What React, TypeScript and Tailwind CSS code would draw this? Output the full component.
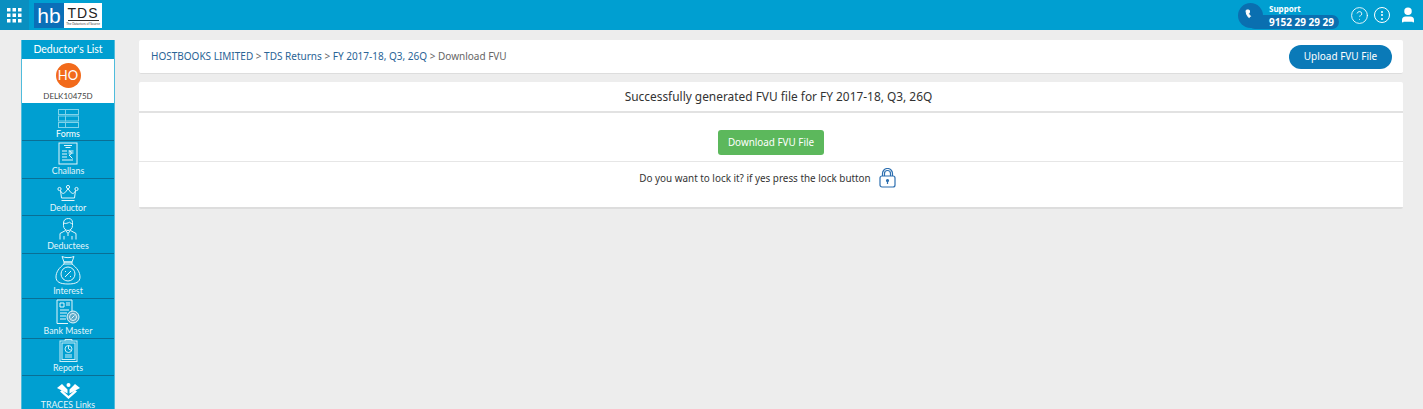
import { Phone, CircleHelp, User } from "lucide-react";
import { ReactNode } from "react";

const FormsIcon = () => (
  <svg width="21" height="19" viewBox="0 0 21 19" fill="none" stroke="#7fd3ea" strokeWidth="1">
    <rect x="0.5" y="0.5" width="7" height="5" />
    <rect x="7.5" y="0.500" width="13" height="5" />
    <rect x="0.500" y="7" width="7" height="5" />
    <rect x="7.500" y="7" width="13" height="5" />
    <rect x="0.500" y="13.500" width="7" height="5" />
    <rect x="7.500" y="13.500" width="13" height="5" />
  </svg>
);

const ChallansIcon = () => (
  <svg width="20" height="23" viewBox="0 0 20 23" fill="none" stroke="#e4f6fb" strokeWidth="1">
    <rect x="1" y="1" width="18" height="21" />
    <path d="M6 3.500h8M7.500 5.500h5M4 9h5M4 12h5M4 15h5M4 18h11" />
    <path d="M10.500 9h5M10.500 11h5M11 9c3 0 3 4 0 4l3.500 3.500" />
  </svg>
);

const DeductorIcon = () => (
  <svg width="22" height="17" viewBox="0 0 22 17" fill="none" stroke="#e4f6fb" strokeWidth="1">
    <circle cx="2.500" cy="4" r="1.600" />
    <circle cx="11" cy="2" r="1.600" />
    <circle cx="19.500" cy="4" r="1.600" />
    <path d="M3.500 5.500c1 3 3 4 5 1.500L11 3.800 13.500 7c2 2.500 4 1.500 5-1.500L17.500 13h-13zM4.500 15.500h13" />
  </svg>
);

const DeducteesIcon = () => (
  <svg width="18" height="22" viewBox="0 0 18 22" fill="none" stroke="#e4f6fb" strokeWidth="1">
    <path d="M4.500 5c0-3 2-4.500 5-4.500 2.500 0 4 1.500 4 4v3c0 3-2 5-4.500 5s-4.500-2-4.500-5z" />
    <path d="M4.500 5c2 1 5 0 6-1 .5 1 1.500 1.500 3 1.500" />
    <path d="M6.500 12.500 1 15.500V21.500M11.500 12.500l5.500 3V21.500M6.500 12.500 9 15.500l2.500-3M5 18v3.500M13 18v3.500M9 15.500V18" />
  </svg>
);

const InterestIcon = () => (
  <svg width="26" height="30" viewBox="0 0 26 30" fill="none" stroke="#e4f6fb" strokeWidth="1">
    <path d="M7 1.500c3 1.500 9 1.500 12 0l-2 5.500h-8zM9 7h8v2H9z" />
    <path d="M9 9C4 13 1 17 1 22c0 5 4 7 12 7s12-2 12-7c0-5-3-9-8-13" />
    <circle cx="13" cy="19" r="7" />
    <path d="M10 16.500h1M15 21.500h1M10 22l6-6" />
  </svg>
);

const BankMasterIcon = () => (
  <svg width="24" height="26" viewBox="0 0 24 26" fill="none" stroke="#e4f6fb" strokeWidth="1">
    <path d="M12 24.500H1V1h15v12" />
    <path d="M4 4h4v4H4zM10 4h4M10 6h4M4 11h9M4 14h7M4 17h6M4 20h6" />
    <circle cx="17" cy="18" r="6" fill="#5aa9c7" />
    <circle cx="17" cy="18" r="3.500" />
    <path d="M15.500 19.500 18.500 16.500" />
  </svg>
);

const ReportsIcon = () => (
  <svg width="19" height="23" viewBox="0 0 19 23" fill="none" stroke="#c9eef8" strokeWidth="1">
    <rect x="1" y="2" width="17" height="20.500" />
    <rect x="3" y="4" width="13" height="16.500" />
    <path d="M6 2V.5h7V2" />
    <circle cx="9.500" cy="10" r="3.500" />
    <path d="M9.500 10V6.500M9.500 10l3 1.500M6 16h7M6 18h7" />
  </svg>
);

const TracesIcon = () => (
  <svg width="23" height="16" viewBox="0 0 23 16" fill="#fff">
    <circle cx="11.500" cy="2" r="2" />
    <path d="M0 5 5 1l5.500 5.500v4zM23 5l-5-4-5.500 5.500v4z" />
    <path d="M3 8.500 11.500 16 20 8.500l-2-1.500-6.500 6L5 7z" />
  </svg>
);

const LockIcon = () => (
  <svg width="17" height="20" viewBox="0 0 17 20" fill="none" stroke="#2d6fb0" strokeWidth="1.200">
    <path d="M3.500 8V5.500a5 5 0 0 1 10 0V8M5.500 8V5.500a3 3 0 0 1 6 0V8" />
    <rect x="1" y="8" width="15" height="11" rx="2" />
    <circle cx="8.500" cy="12.500" r="1" fill="#2d6fb0" />
    <path d="M8.500 13v3" />
  </svg>
);

const menu: { label: string; icon: ReactNode; height: string; labelColor: string }[] = [
  { label: "Forms", icon: <FormsIcon />, height: "h-[38px] pb-0", labelColor: "text-white" },
  { label: "Challans", icon: <ChallansIcon />, height: "h-[38px] pb-[1px]", labelColor: "text-[#e4f6fb]" },
  { label: "Deductor", icon: <DeductorIcon />, height: "h-[37px] pb-[1px]", labelColor: "text-[#e4f6fb]" },
  { label: "Deductees", icon: <DeducteesIcon />, height: "h-[38px] pb-[1px]", labelColor: "text-[#e4f6fb]" },
  { label: "Interest", icon: <InterestIcon />, height: "h-[45px] pb-[1px]", labelColor: "text-[#e4f6fb]" },
  { label: "Bank Master", icon: <BankMasterIcon />, height: "h-[40px] pb-[1px]", labelColor: "text-[#e4f6fb]" },
  { label: "Reports", icon: <ReportsIcon />, height: "h-[37px] pb-[1px]", labelColor: "text-[#e4f6fb]" },
  { label: "TRACES Links", icon: <TracesIcon />, height: "h-[36px] pb-0", labelColor: "text-[#e4f6fb]" },
];

const Sidebar = () => (
  <aside className="w-[94px] shrink-0 border-x border-[#4fbcdc] font-['Lato',sans-serif]">
    <div className="h-[19px] bg-[#009fd1] text-white text-[10.500px] leading-[19px] text-center">Deductor's List</div>
    <div className="h-[44px] bg-white flex flex-col items-center pt-[4px]">
      <div className="w-[25px] h-[25px] rounded-full bg-[#f26a1b] text-white text-[13px] leading-[25px] text-center">HO</div>
      <div className="text-[8px] leading-[12px] mt-[2px] text-[#444]">DELK10475D</div>
    </div>
    {menu.map((item) => (
      <div
        key={item.label}
        className={`${item.height} bg-[#009fd1] border-b border-[#0a6f95] flex flex-col items-center justify-end overflow-hidden`}
      >
        <div className="flex items-center justify-center">{item.icon}</div>
        <div className={`text-[8.800px] leading-[13px] mt-[-1px] whitespace-nowrap ${item.labelColor}`}>{item.label}</div>
      </div>
    ))}
  </aside>
);

export default function App() {
  return (
    <div className="h-[409px] overflow-hidden bg-[#ededed] font-['Noto_Sans',sans-serif]">
      <header className="h-[30px] bg-[#009fd1] flex items-center">
        <div className="w-[29px] h-[30px] bg-[#0a8fc0] flex items-center justify-center">
          <svg width="15" height="15" viewBox="0 0 15 15" fill="#fff">
            <rect x="0" y="0" width="3.500" height="3.500" />
            <rect x="5.500" y="0" width="3.500" height="3.500" />
            <rect x="11" y="0" width="3.500" height="3.500" />
            <rect x="0" y="5.500" width="3.500" height="3.500" />
            <rect x="5.500" y="5.500" width="3.500" height="3.500" />
            <rect x="11" y="5.500" width="3.500" height="3.500" />
            <rect x="0" y="11" width="3.500" height="3.500" />
            <rect x="5.500" y="11" width="3.500" height="3.500" />
            <rect x="11" y="11" width="3.500" height="3.500" />
          </svg>
        </div>
        <div className="ml-[5px] h-[25px] flex">
          <div className="w-[30px] bg-[#0a6fb8] text-white text-[21px] leading-[25px] text-center font-['Liberation_Sans',sans-serif]">hb</div>
          <div className="w-[38px] bg-white flex flex-col items-center pt-[4px]">
            <span className="w-[31px] border-b border-[#333] text-[14px] leading-[13px] tracking-[1px] text-center text-[#222] font-['Liberation_Sans',sans-serif]">TDS</span>
            <span className="mt-[1px] text-[3px] leading-[4px] text-[#333] whitespace-nowrap">The Datactors of Source</span>
          </div>
        </div>
        <div className="ml-auto flex items-center">
          <div className="relative w-[101px] h-[25px] mr-[11px]">
            <div className="absolute left-0 top-0 w-[25px] h-[25px] rounded-full bg-[#0a6fb0] flex items-center justify-center">
              <Phone size={12} fill="#fff" stroke="#fff" />
            </div>
            <div className="absolute left-[10px] right-0 top-[12px] h-[14px] rounded-full bg-[#0a6fb0]" />
            <div className="absolute left-[31px] top-[0px] text-[8px] leading-[12px] font-bold text-white">Support</div>
            <div className="absolute left-[31px] top-[12px] text-[10px] leading-[14px] font-bold text-white whitespace-nowrap">9152 29 29 29</div>
          </div>
          <CircleHelp size={19} stroke="#fff" strokeWidth={1.100} />
          <div className="ml-[5px] w-[16px] h-[16px] rounded-full border border-white flex flex-col items-center justify-center gap-[1.500px]">
            <span className="w-[2px] h-[2px] bg-white rounded-full" />
            <span className="w-[2px] h-[2px] bg-white rounded-full" />
            <span className="w-[2px] h-[2px] bg-white rounded-full" />
          </div>
          <User size={18} fill="#fff" stroke="#fff" className="ml-[9px] mr-[6px]" />
        </div>
      </header>
      <div className="flex pt-[10px] pl-[21px] pr-[20px]">
        <Sidebar />
        <main className="flex-1 ml-[24px]">
          <div className="h-[34px] bg-white border-b border-[#ddd] rounded-[2px] flex items-center justify-between pl-[12px] pr-[11px]">
            <div className="text-[10px] text-[#666]">
              <span className="text-[#2a6496]">HOSTBOOKS LIMITED</span>
              <span> &gt; </span>
              <span className="text-[#2a6496]">TDS Returns</span>
              <span> &gt; </span>
              <span className="text-[#2a6496]">FY 2017-18, Q3, 26Q</span>
              <span> &gt; Download FVU</span>
            </div>
            <button className="w-[103px] h-[24px] rounded-full bg-[#0a7ab8] text-white text-[10px]">Upload FVU File</button>
          </div>
          <div className="mt-[8px] bg-white border-b-2 border-[#ddd] rounded-[2px]">
            <div className="h-[31px] pl-[15px] border-b-2 border-[#e2e2e2] flex items-center justify-center text-[11.900px] text-[#333]">
              Successfully generated FVU file for FY 2017-18, Q3, 26Q
            </div>
            <div className="h-[49px] border-b border-[#e6e6e6] flex items-end justify-center pb-[6px]">
              <button className="w-[106px] h-[25px] rounded-[3px] bg-[#5cb85c] text-white text-[9.900px]">Download FVU File</button>
            </div>
            <div className="h-[45px] pr-[7px] flex items-start justify-center gap-[8px] pt-[6px] text-[9.900px] text-[#333]">
              <span className="leading-[20px]">Do you want to lock it? if yes press the lock button</span>
              <LockIcon />
            </div>
          </div>
        </main>
      </div>
    </div>
  );
}
